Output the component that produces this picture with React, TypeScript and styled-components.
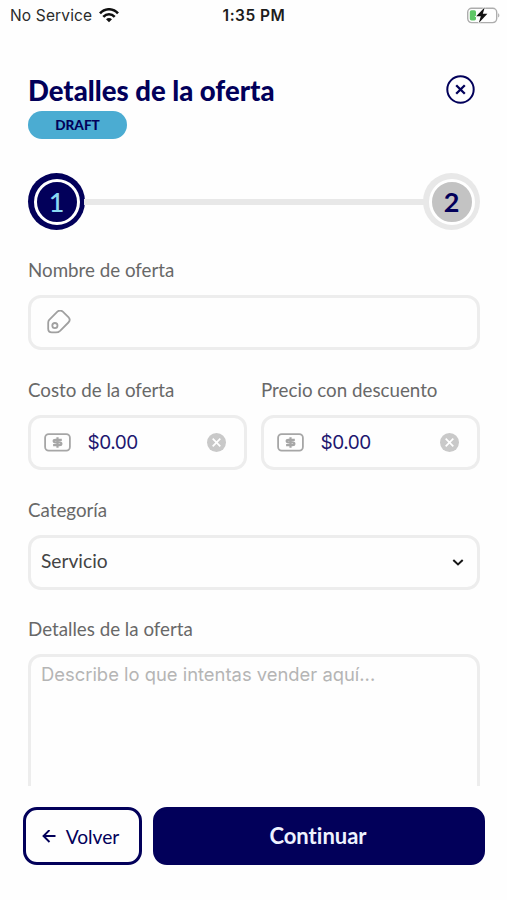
import React from "react";
import styled, { createGlobalStyle, css } from "styled-components";

const navy = "#02005a";
const line = "#ededed";

const GlobalStyle = createGlobalStyle`
  * { box-sizing: border-box; }
  body { margin: 0; background: #fefefe; }
`;

const Screen = styled.div`
  width: 507px;
  height: 900px;
  display: flex;
  flex-direction: column;
  overflow: hidden;
  background: #fefefe;
  font-family: Lato, sans-serif;
  font-variant-ligatures: none;
  color: ${navy};
`;

const StatusBar = styled.header`
  height: 30px;
  flex: none;
  display: grid;
  grid-template-columns: 1fr auto 1fr;
  align-items: center;
  padding: 0 7px 0 10px;
  font-family: Inter, sans-serif;
  font-size: 15.5px;
  line-height: 30px;
  color: #2b2b2b;
`;

const Carrier = styled.div`
  display: flex;
  align-items: center;
  gap: 7px;
  letter-spacing: 0.15px;
`;

const Clock = styled.div`
  margin: 0 1px 0 -1px;
  padding-top: 1px;
  font-weight: 600;
  letter-spacing: 0.5px;
  color: #1c1c1c;
`;

const BatterySlot = styled.div`
  display: flex;
  justify-content: flex-end;
`;

const Content = styled.main`
  height: 756px;
  flex: none;
  overflow: hidden;
  padding: 44px 27px 0 28px;
`;

const Heading = styled.div`
  display: flex;
  justify-content: space-between;
  padding-right: 5px;
`;

const Title = styled.h1`
  margin: 0;
  font-size: 27.5px;
  line-height: 34px;
  font-weight: 900;
  white-space: nowrap;
`;

const CloseButton = styled.button`
  display: flex;
  width: 29px;
  height: 29px;
  margin-top: 1px;
  padding: 0;
  border: 0;
  background: none;
`;

const Badge = styled.div`
  width: 99px;
  height: 28px;
  margin-top: 3px;
  border-radius: 14px;
  background: #4bacd2;
  font-size: 13.6px;
  line-height: 28px;
  font-weight: 900;
  text-align: center;
`;

const Stepper = styled.div`
  display: flex;
  align-items: center;
  margin: 34px 0 30px;
`;

const Step = styled.div<{ $active?: boolean }>`
  width: 57px;
  height: 57px;
  flex: none;
  padding: 5.5px;
  border-radius: 50%;
  background: ${(p) => (p.$active ? navy : "#e8e8e8")};
`;

const StepNumber = styled.div<{ $active?: boolean }>`
  height: 46px;
  border: 3px solid #fff;
  border-radius: 50%;
  background: ${(p) => (p.$active ? navy : "#c3c3c3")};
  color: ${(p) => (p.$active ? "#8bd8f2" : navy)};
  font-size: 27px;
  line-height: 40px;
  font-weight: ${(p) => (p.$active ? 500 : 700)};
  text-align: center;
`;

const StepLine = styled.div`
  flex: 1;
  height: 6px;
  margin: 0 -1px;
  background: #e8e8e8;
`;

const Field = styled.section<{ $gap?: number }>`
  flex: 1;
  margin-bottom: ${(p) => p.$gap ?? 30}px;
`;

const FieldRow = styled.div`
  display: flex;
  gap: 14px;
`;

const Label = styled.div`
  height: 20px;
  margin-bottom: 15px;
  font-size: 18.75px;
  line-height: 20px;
  color: #686868;
  white-space: nowrap;
`;

const frame = css`
  border: 3px solid ${line};
  border-radius: 13px;
`;

const InputBox = styled.div<{ $left?: number; $right?: number }>`
  ${frame}
  height: 55px;
  display: flex;
  align-items: center;
  padding: 0 ${(p) => p.$right ?? 16}px 0 ${(p) => p.$left ?? 13}px;
`;

const Amount = styled.span`
  flex: 1;
  margin-left: 16.5px;
  font-family: Inter, sans-serif;
  font-size: 19px;
  letter-spacing: -0.5px;
  line-height: 24px;
  color: #1d176f;
`;

const Selected = styled.span`
  flex: 1;
  margin-top: -3px;
  font-size: 19.2px;
  line-height: 24px;
  color: #444;
`;

const TextBox = styled.div`
  ${frame}
  height: 200px;
  padding: 5px 10px;
  font-family: Inter, sans-serif;
  font-size: 18.4px;
  line-height: 24px;
  color: #b5b5b5;
`;

const Footer = styled.footer`
  display: flex;
  gap: 11px;
  padding: 21px 22px 0 23px;
`;

const Button = styled.button<{ $primary?: boolean }>`
  height: 58px;
  width: ${(p) => (p.$primary ? "auto" : "119px")};
  flex: ${(p) => (p.$primary ? 1 : "none")};
  display: flex;
  align-items: center;
  justify-content: center;
  gap: 10px;
  padding: ${(p) => (p.$primary ? "0 2px 0 0" : "1px 4px 0 0")};
  border: 3px solid ${navy};
  border-radius: 14px;
  background: ${(p) => (p.$primary ? navy : "#fefefe")};
  color: ${(p) => (p.$primary ? "#eef2ff" : navy)};
  font-family: Lato, sans-serif;
  font-variant-ligatures: none;
  font-size: ${(p) => (p.$primary ? 22 : 19.2)}px;
  font-weight: ${(p) => (p.$primary ? 700 : 400)};
  line-height: 28px;
`;

const WifiIcon = () => (
  <svg width="20" height="15" viewBox="0 0 20 15" fill="none" stroke="#111" strokeWidth="2.6">
    <path d="M1 5.4C6-.1 14-.1 19 5.4" />
    <path d="M4.3 8.8c3.3-3.5 8.1-3.5 11.4 0" />
    <path d="M7 11.2c1.8-1.7 4.2-1.7 6 0l-3 3z" fill="#111" stroke="none" />
  </svg>
);

const BatteryIcon = () => (
  <svg width="34" height="18" viewBox="0 0 34 18">
    <rect x="1.7" y="1.2" width="29" height="14.4" rx="4" fill="none" stroke="#adadad" strokeWidth="1.4" />
    <path d="M32.2 6.2v4.4c1.5-.6 1.5-3.8 0-4.4z" fill="#a5a5a5" />
    <rect x="3.8" y="3.3" width="6.2" height="10.2" rx="1.7" fill="#5dc765" />
    <path d="M18.8.2 10.2 9.3h4.6L12.8 16 21.4 6.8h-4.6z" fill="#111" stroke="#fefefe" strokeWidth="1.4" paintOrder="stroke" />
  </svg>
);

const CloseIcon = () => (
  <svg width="29" height="29" viewBox="0 0 29 29" fill="none" stroke={navy} strokeWidth="2">
    <circle cx="14.5" cy="14.5" r="13.2" />
    <path d="m10.2 10.2 8.6 8.6m0-8.6-8.6 8.6" strokeWidth="2.3" />
  </svg>
);

const TagIcon = () => (
  <svg width="26" height="26" viewBox="0 0 26 26" fill="none" stroke="#a0a0a0" strokeWidth="1.8">
    <path
      d="M3.2 9.8 11.4 1.6Q14.1-.7 16.8 1.6l5.6 5.5q2.6 2.8 0 5.4l-8.3 8.3Q12.4 22.4 10 22.4H5.8q-3.6 0-3.6-3.6v-6q0-1.9 1-3z"
      strokeLinejoin="round"
    />
    <circle cx="8.9" cy="15.6" r="2.6" />
  </svg>
);

const MoneyIcon = () => (
  <svg width="27" height="19" viewBox="0 0 27 19" fill="none" stroke="#a6a6a6" strokeWidth="1.8">
    <rect x="1.1" y="1.1" width="24.8" height="16.6" rx="3.6" />
    <path d="M17.8 6.8H11.5c-2.4 0-2.4 2.6 0 2.6h4c2.5 0 2.5 2.8 0 2.8H9.1M13.5 4.2v10.6" strokeWidth="2.2" />
  </svg>
);

const ClearIcon = () => (
  <svg width="19" height="19" viewBox="0 0 19 19">
    <circle cx="9.5" cy="9.5" r="9.5" fill="#c9c9c9" />
    <path d="m5.7 5.7 7.6 7.6m0-7.6-7.6 7.6" stroke="#fff" strokeWidth="1.7" />
  </svg>
);

const ChevronIcon = () => (
  <svg width="12" height="8" viewBox="0 0 12 8" fill="none" stroke="#171717" strokeWidth="2">
    <path d="m1.3 1 4.7 4.4L10.7 1" />
  </svg>
);

const ArrowIcon = () => (
  <svg width="14" height="14" viewBox="0 0 14 14" fill="none" stroke={navy} strokeWidth="1.9">
    <path d="M13.5 6H1.7M7.5 0 1.5 6l6 6" />
  </svg>
);

const PriceField = ({ label }: { label: string }) => (
  <Field>
    <Label>{label}</Label>
    <InputBox $right={18}>
      <MoneyIcon />
      <Amount>$0.00</Amount>
      <ClearIcon />
    </InputBox>
  </Field>
);

export default function App() {
  return (
    <>
      <GlobalStyle />
      <Screen>
        <StatusBar>
          <Carrier>
            No Service
            <WifiIcon />
          </Carrier>
          <Clock>1:35 PM</Clock>
          <BatterySlot>
            <BatteryIcon />
          </BatterySlot>
        </StatusBar>
        <Content>
          <Heading>
            <Title>Detalles de la oferta</Title>
            <CloseButton aria-label="Cerrar">
              <CloseIcon />
            </CloseButton>
          </Heading>
          <Badge>DRAFT</Badge>
          <Stepper>
            <Step $active>
              <StepNumber $active>1</StepNumber>
            </Step>
            <StepLine />
            <Step>
              <StepNumber>2</StepNumber>
            </Step>
          </Stepper>
          <Field>
            <Label>Nombre de oferta</Label>
            <InputBox $left={15}>
              <TagIcon />
            </InputBox>
          </Field>
          <FieldRow>
            <PriceField label="Costo de la oferta" />
            <PriceField label="Precio con descuento" />
          </FieldRow>
          <Field $gap={29}>
            <Label>Categoría</Label>
            <InputBox $left={10} $right={13}>
              <Selected>Servicio</Selected>
              <ChevronIcon />
            </InputBox>
          </Field>
          <Field>
            <Label>Detalles de la oferta</Label>
            <TextBox>Describe lo que intentas vender aquí...</TextBox>
          </Field>
        </Content>
        <Footer>
          <Button>
            <ArrowIcon />
            Volver
          </Button>
          <Button $primary>Continuar</Button>
        </Footer>
      </Screen>
    </>
  );
}
